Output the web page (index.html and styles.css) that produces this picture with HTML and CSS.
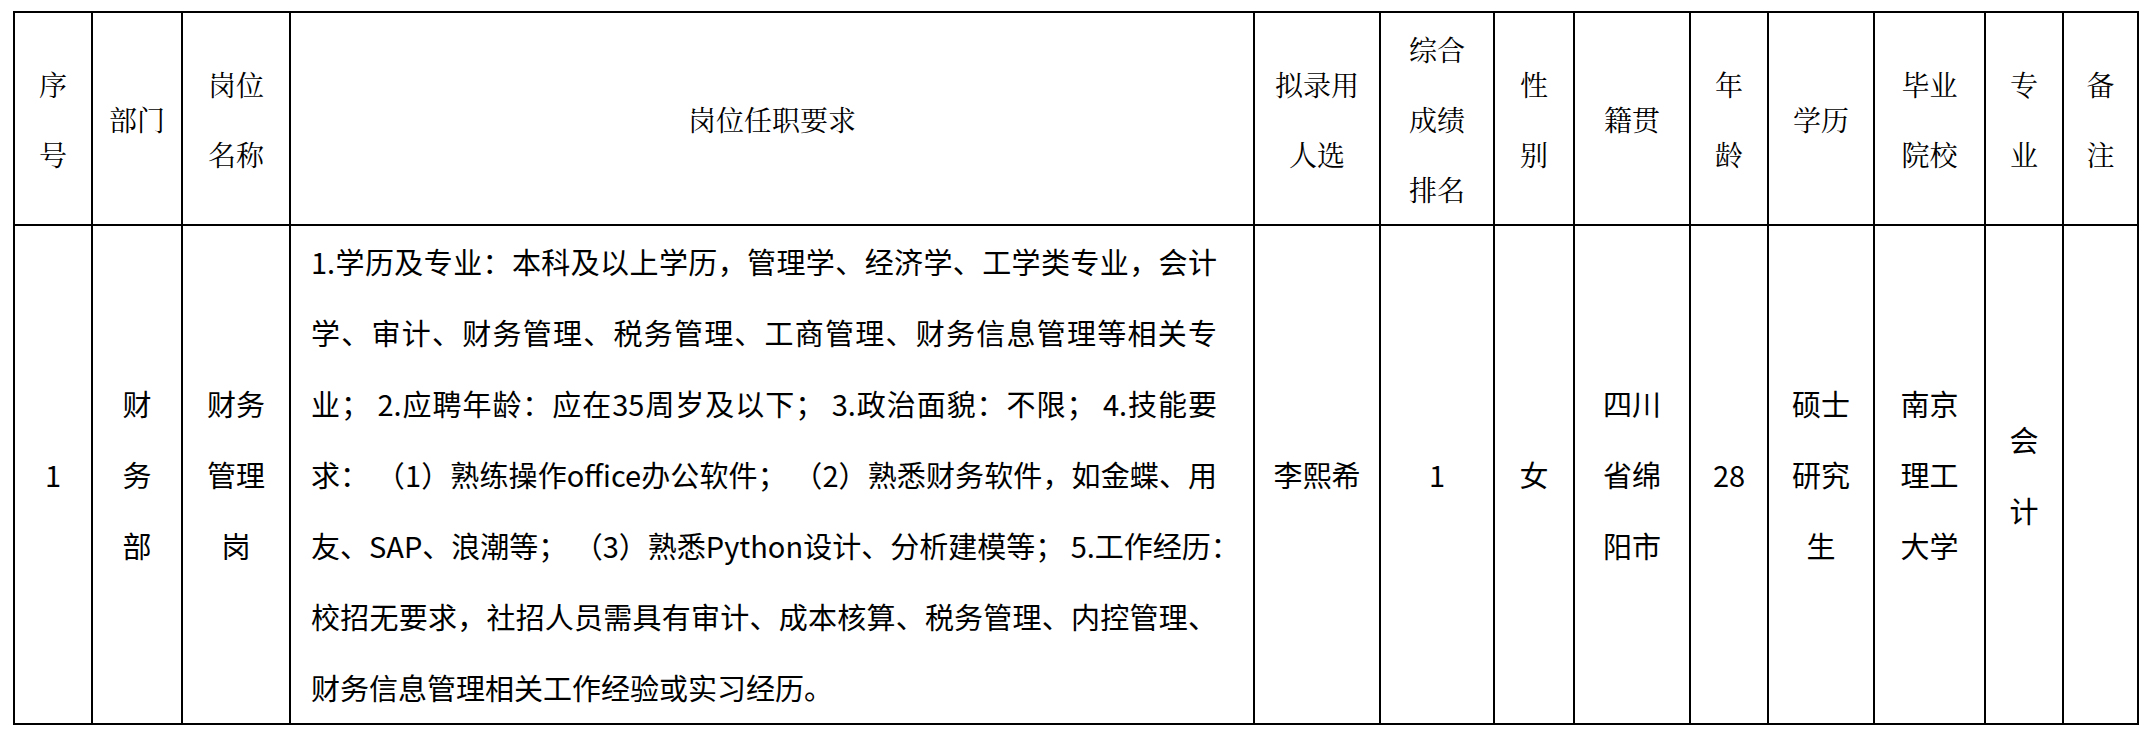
FILE: index.html
```html
<!DOCTYPE html>
<html lang="zh-CN">
<head>
<meta charset="utf-8">
<title>拟录用人员名单</title>
<link rel="stylesheet" href="styles.css">
</head>
<body>
<table class="roster">
  <colgroup>
    <col class="c-no"><col class="c-dept"><col class="c-post"><col class="c-req">
    <col class="c-name"><col class="c-rank"><col class="c-sex"><col class="c-origin">
    <col class="c-age"><col class="c-edu"><col class="c-school"><col class="c-major"><col class="c-note">
  </colgroup>
  <thead>
    <tr class="head-row">
      <th>序<br>号</th>
      <th>部门</th>
      <th>岗位<br>名称</th>
      <th>岗位任职要求</th>
      <th>拟录用<br>人选</th>
      <th>综合<br>成绩<br>排名</th>
      <th>性<br>别</th>
      <th>籍贯</th>
      <th>年<br>龄</th>
      <th>学历</th>
      <th>毕业<br>院校</th>
      <th>专<br>业</th>
      <th>备<br>注</th>
    </tr>
  </thead>
  <tbody>
    <tr class="body-row">
      <td>1</td>
      <td>财<br>务<br>部</td>
      <td>财务<br>管理<br>岗</td>
      <td class="req">
        <div class="ln">1.学历及专业：本科及以上学历，管理学、经济学、工学类专业，会计</div>
        <div class="ln">学、审计、财务管理、税务管理、工商管理、财务信息管理等相关专</div>
        <div class="ln">业； 2.应聘年龄：应在35周岁及以下； 3.政治面貌：不限； 4.技能要</div>
        <div class="ln">求： （1）熟练操作office办公软件； （2）熟悉财务软件，如金蝶、用</div>
        <div class="ln">友、SAP、浪潮等； （3）熟悉Python设计、分析建模等； 5.工作经历：</div>
        <div class="ln">校招无要求，社招人员需具有审计、成本核算、税务管理、内控管理、</div>
        <div class="ln last">财务信息管理相关工作经验或实习经历。</div>
      </td>
      <td>李熙希</td>
      <td>1</td>
      <td>女</td>
      <td>四川<br>省绵<br>阳市</td>
      <td>28</td>
      <td>硕士<br>研究<br>生</td>
      <td>南京<br>理工<br>大学</td>
      <td>会<br>计</td>
      <td></td>
    </tr>
  </tbody>
</table>
</body>
</html>
```

FILE: styles.css
```css
html, body {
  background: #ffffff;
}
body {
  margin: 0;
  padding: 11px 0 0 13px;
}
.roster {
  border-collapse: collapse;
  table-layout: fixed;
  width: 2126px;
  color: #000;
}
.roster th, .roster td {
  border: 2px solid #000;
  padding: 0 6px;
  text-align: center;
  vertical-align: middle;
}
.roster th {
  font-family: "Noto Serif CJK SC", "Noto Sans CJK SC", serif;
  font-weight: normal;
  font-size: 28px;
  line-height: 70px;
}
.roster td {
  font-family: "Noto Sans CJK SC", sans-serif;
  font-size: 29px;
  line-height: 71px;
}
.head-row { height: 213px; }
.body-row { height: 497px; }

.c-no { width: 78px; }
.c-dept { width: 90px; }
.c-post { width: 108px; }
.c-req { width: 964px; }
.c-name { width: 126px; }
.c-rank { width: 114px; }
.c-sex { width: 80px; }
.c-origin { width: 116px; }
.c-age { width: 78px; }
.c-edu { width: 106px; }
.c-school { width: 111px; }
.c-major { width: 78px; }
.c-note { width: 75px; }

.roster td.req {
  padding: 0 36px 0 20px;
  text-align: left;
}
.req .ln {
  text-align: justify;
  text-align-last: justify;
  white-space: nowrap;
}
.req .ln.last {
  text-align-last: left;
}
```
